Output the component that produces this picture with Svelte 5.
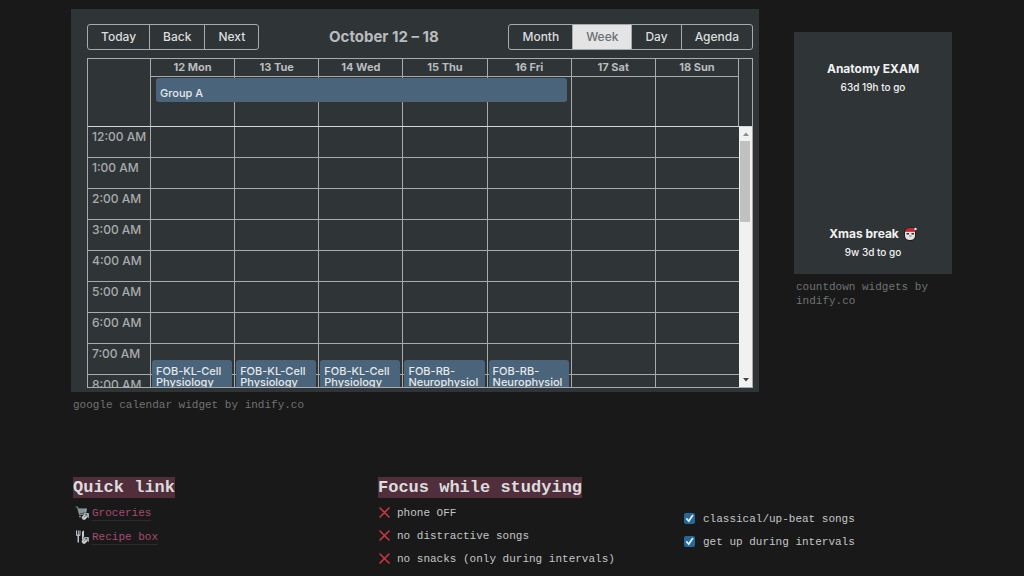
<script>
    const days = ['12 Mon', '13 Tue', '14 Wed', '15 Thu', '16 Fri', '17 Sat', '18 Sun'];
    const views = ['Month', 'Week', 'Day', 'Agenda'];

    // one entry per weekday, all of them start in the 7 AM row
    const events = [
        'FOB-KL-Cell Physiology',
        'FOB-KL-Cell Physiology',
        'FOB-KL-Cell Physiology',
        'FOB-RB-Neurophysiology',
        'FOB-RB-Neurophysiology'
    ];

    const rowHeight = 31;
    const hours = Array.from({ length: 24 }, (_, h) => `${h % 12 || 12}:00 ${h < 12 ? 'AM' : 'PM'}`);
    const avoid = ['phone OFF', 'no distractive songs', 'no snacks (only during intervals)'];

    let view = $state('Week');
    let todo = $state([
        { text: 'classical/up-beat songs', done: true },
        { text: 'get up during intervals', done: true }
    ]);

    let scroller;
    let thumbTop = $state(0);
    let thumbHeight = $state(35);
    // labels below the scrolled area are filled in once they come into view
    let lastHour = $state(9);

    function onScroll() {
        thumbTop = (scroller.scrollTop / scroller.scrollHeight) * 100;
        thumbHeight = (scroller.clientHeight / scroller.scrollHeight) * 100;
        lastHour = Math.ceil((scroller.scrollTop + scroller.clientHeight) / rowHeight);
    }

    function scrollBy(amount) {
        scroller.scrollTop += amount;
    }

    $effect(() => {
        onScroll();
    });
</script>

<main>
    <section class="widgets">
        <figure>
            <div class="calendar">
                <div class="toolbar">
                    <div class="group">
                        <button>Today</button>
                        <button>Back</button>
                        <button>Next</button>
                    </div>
                    <h1>October 12 – 18</h1>
                    <div class="group">
                        {#each views as name}
                            <button class:active={view === name} onclick={() => (view = name)}>{name}</button>
                        {/each}
                    </div>
                </div>

                <div class="week">
                    <div class="head">
                        <table>
                            <colgroup><col class="gutter" /></colgroup>
                            <thead>
                                <tr>
                                    <td rowspan="2"></td>
                                    {#each days as day}
                                        <th scope="col">{day}</th>
                                    {/each}
                                </tr>
                                <tr class="allday">
                                    {#each days as day, i}
                                        <td>
                                            {#if i === 0}
                                                <div class="event wide">Group A</div>
                                            {/if}
                                        </td>
                                    {/each}
                                </tr>
                            </thead>
                        </table>
                    </div>
                    <div class="body">
                        <div class="scroller" bind:this={scroller} onscroll={onScroll}>
                            <table>
                                <colgroup><col class="gutter" /></colgroup>
                                <tbody>
                                    {#each hours as hour, h}
                                        <tr>
                                            <th scope="row">{h < lastHour ? hour : ''}</th>
                                            {#each days as day, i}
                                                <td>
                                                    {#if h === 7 && events[i]}
                                                        <div class="event timed">{events[i]}</div>
                                                    {/if}
                                                </td>
                                            {/each}
                                        </tr>
                                    {/each}
                                </tbody>
                            </table>
                        </div>
                        <div class="scrollbar">
                            <button aria-label="Scroll up" onclick={() => scrollBy(-rowHeight)}>
                                <svg viewBox="0 0 6 4"><path d="M0 4 3 0.5 6 4z" fill="#8b8b8b" /></svg>
                            </button>
                            <div class="track">
                                <div class="thumb" style="top: {thumbTop}%; height: {thumbHeight}%"></div>
                            </div>
                            <button aria-label="Scroll down" onclick={() => scrollBy(rowHeight)}>
                                <svg viewBox="0 0 6 4"><path d="M0 0 3 3.5 6 0z" fill="#444" /></svg>
                            </button>
                        </div>
                    </div>
                </div>
            </div>
            <figcaption>google calendar widget by indify.co</figcaption>
        </figure>

        <figure class="side">
            <div class="countdowns">
                <div>
                    <h3>Anatomy EXAM</h3>
                    <p>63d 19h to go</p>
                </div>
                <div>
                    <h3>
                        Xmas break
                        <svg class="santa" viewBox="0 0 14 14" aria-hidden="true">
                            <path d="M1 7C0 3 3 0 7 0.5L13 0.5 13 8C13 12 10 14 7 14S1 12 1 7z" fill="#1c1d1f" />
                            <path d="M2 4.500h10v4c0 3-2 4.500-5 4.500S2 11.500 2 8.500z" fill="#e4e1e1" />
                            <path d="M2 4.5C3 1 5 1 8 1h4.500L12 4.500z" fill="#d0242c" />
                            <path d="M3.500 6h2.500v1.500H3.500zM8.500 6H11v1.500H8.500z" fill="#33282c" />
                            <path d="M6 8h2.500v2H6z" fill="#c9a0a2" />
                            <circle cx="12.500" cy="2" r="1.200" fill="#eee" />
                        </svg>
                    </h3>
                    <p>9w 3d to go</p>
                </div>
            </div>
            <figcaption>countdown widgets by indify.co</figcaption>
        </figure>
    </section>

    <section class="notes">
        <div>
            <h2>Quick link</h2>
            <ul class="links">
                <li>
                    <svg viewBox="0 0 14 14" aria-hidden="true">
                        <path d="M0.500 1h2l2 7.500h6" fill="none" stroke="#77838b" stroke-width="1.200" />
                        <path d="M3 2.500h9l-1 5H4.200z" fill="#98a5ae" />
                        <path d="M5 3v4M7 3v4M9 3v4" stroke="#56636b" stroke-width="0.600" />
                        <circle cx="5" cy="10.500" r="1" fill="#87939b" />
                        <path d="M8 7h6v5.500l-1.500-1.200-2.500 2.700H8L6.500 12V11l2.500-2.500z" fill="#d3d6d8" stroke="#191919" stroke-width="0.500" />
                        <path d="M8.500 11.800 12 8.500M10 8.500h2v2" fill="none" stroke="#45494c" stroke-width="0.800" />
                    </svg>
                    <a href="#groceries">Groceries</a>
                </li>
                <li>
                    <svg viewBox="0 0 14 14" aria-hidden="true">
                        <path d="M1 0.500v4c0 1 .5 1.500 1.500 1.500v6.500H4V6C5 6 5.500 5.500 5.500 4.500v-4h-1v4h-.7v-4h-1v4H2v-4z" fill="#b5bfc6" />
                        <path d="M7 12.500V2.500C7 1.500 7.800 0.500 9 0.500v12z" fill="#c5cdd2" />
                        <path d="M8.500 7H14v5.500l-1.500-1.200-2.500 2.700H8L6.500 12V11l2.500-2.500z" fill="#d3d6d8" stroke="#191919" stroke-width="0.500" />
                        <path d="M8.500 11.800 12 8.500M10 8.500h2v2" fill="none" stroke="#45494c" stroke-width="0.800" />
                    </svg>
                    <a href="#recipes">Recipe box</a>
                </li>
            </ul>
        </div>
        <div>
            <h2>Focus while studying</h2>
            <ul class="avoid">
                {#each avoid as item}
                    <li>
                        <svg viewBox="0 0 11 11" aria-hidden="true">
                            <path d="M1 1 10 10M10 1 1 10" stroke="#cc3640" stroke-width="1.600" stroke-linecap="round" />
                        </svg>
                        {item}
                    </li>
                {/each}
            </ul>
        </div>
        <ul class="todo">
            {#each todo as item}
                <li>
                    <label><input type="checkbox" bind:checked={item.done} />{item.text}</label>
                </li>
            {/each}
        </ul>
    </section>
</main>

<style>
    :global(body) {
        background: #191919;
    }

    main {
        padding: 9px 72px 0 71px;
        color: #c4c6c7;
        font: 11px/14px 'Liberation Mono', monospace;
    }

    h1, h2, h3, p, ul, figure {
        margin: 0;
        padding: 0;
    }

    ul {
        list-style: none;
    }

    button {
        margin: 0;
        padding: 0;
        border: 0;
        background: none;
        font: inherit;
        color: inherit;
    }

    .widgets {
        display: grid;
        grid-template-columns: minmax(0, 688fr) minmax(0, 158fr);
        gap: 35px;
        align-items: start;
    }

    figcaption {
        padding: 6px 2px 0;
        color: #6f7274;
    }

    .calendar, .countdowns {
        background: #2f3437;
        font-family: Inter, sans-serif;
    }

    .calendar {
        padding: 15px 6px 4px 16px;
    }

    .toolbar {
        display: flex;
        justify-content: space-between;
        align-items: center;
        margin-bottom: 8px;
    }

    h1 {
        color: #b9bcbe;
        font-size: 15px;
        line-height: 20px;
        font-weight: 700;
    }

    .group {
        display: flex;
        border: 1px solid #a8abad;
        border-radius: 3px;
        overflow: hidden;
    }

    .group button {
        padding: 0 13px;
        color: #dcddde;
        font-size: 12px;
        line-height: 24px;
        font-weight: 500;
    }

    .group button + button {
        border-left: 1px solid #a8abad;
    }

    .group .active {
        background: #e4e4e4;
        color: #6a6f74;
    }

    .week {
        border: 1px solid #a8abad;
    }

    .head {
        padding-right: 13px;
        border-bottom: 1px solid #d4d6d7;
    }

    table {
        width: 100%;
        table-layout: fixed;
        border-collapse: separate;
        border-spacing: 0;
    }

    .gutter {
        width: 62px;
    }

    th, td {
        box-sizing: border-box;
        padding: 0;
    }

    td {
        position: relative;
    }

    .head th, .head td + td, .allday td, .body td {
        border-left: 1px solid #a8abad;
    }

    .head th {
        height: 18px;
        border-bottom: 1px solid #a8abad;
        color: #b9bcbe;
        font-size: 11px;
        line-height: 17px;
        font-weight: 700;
    }

    .allday td {
        height: 49px;
    }

    .head th:last-child, .allday td:last-child {
        border-right: 1px solid #a8abad;
    }

    .body {
        display: flex;
    }

    .scroller {
        flex: 1;
        height: 260px;
        overflow-y: scroll;
        scrollbar-width: none;
    }

    .body tr {
        height: 31px;
    }

    .body th, .body td {
        border-bottom: 1px solid #a8abad;
    }

    .body th {
        padding: 2px 0 0 4px;
        color: #a9acae;
        font-size: 12px;
        line-height: 16px;
        font-weight: 500;
        text-align: left;
        vertical-align: top;
        white-space: nowrap;
    }

    .event {
        position: absolute;
        z-index: 1;
        box-sizing: border-box;
        border-radius: 3px;
        background: #4a657b;
        color: #e6e8ea;
        font-size: 11px;
        font-weight: 500;
    }

    /* spans Monday to Friday */
    .wide {
        top: 1px;
        left: 5px;
        width: calc(500% - 5px);
        padding: 7px 4px 0;
        line-height: 17px;
    }

    .timed {
        top: 16px;
        left: 1px;
        right: 2px;
        height: 62px;
        padding: 6px 0 0 4px;
        line-height: 11px;
        overflow: hidden;
        overflow-wrap: anywhere;
    }

    .scrollbar {
        display: flex;
        flex-direction: column;
        width: 13px;
        background: #f1f1f1;
    }

    .scrollbar button {
        display: flex;
        align-items: center;
        justify-content: center;
        height: 14px;
    }

    .scrollbar svg {
        width: 6px;
        height: 4px;
    }

    .track {
        position: relative;
        flex: 1;
    }

    .thumb {
        position: absolute;
        left: 1px;
        right: 2px;
        background: #c1c1c1;
    }

    .side {
        margin-top: 23px;
    }

    .countdowns {
        display: grid;
        gap: 129px;
        padding: 27px 0 14px;
        color: #f0f1f1;
        text-align: center;
    }

    h3 {
        display: flex;
        align-items: center;
        justify-content: center;
        gap: 4px;
        font-size: 12px;
        line-height: 20px;
        font-weight: 700;
    }

    .countdowns p {
        font-size: 10px;
        line-height: 16px;
        font-weight: 500;
    }

    .santa {
        width: 14px;
        height: 14px;
    }

    .notes {
        display: grid;
        grid-template-columns: repeat(3, minmax(0, 1fr));
        gap: 36px;
        margin: 65px 0 0 2px;
    }

    h2 {
        width: fit-content;
        margin-bottom: 3px;
        padding-top: 1px;
        background: #512e3c;
        color: #dcdcdc;
        font-size: 17px;
        line-height: 20px;
        font-weight: 700;
        white-space: nowrap;
    }

    li, label {
        display: flex;
        align-items: center;
        white-space: nowrap;
    }

    li {
        height: 23px;
    }

    .links li {
        height: 24px;
        gap: 3px;
        padding-left: 2px;
    }

    .links svg {
        width: 14px;
        height: 14px;
    }

    a {
        border-bottom: 1px solid #2f2a2d;
        color: #a84a74;
        text-decoration: none;
    }

    .avoid li {
        gap: 7px;
        padding-left: 1px;
    }

    .avoid svg {
        width: 11px;
        height: 11px;
    }

    .todo {
        padding: 30px 0 0 1px;
    }

    label {
        gap: 8px;
    }

    input {
        appearance: none;
        display: grid;
        place-items: center;
        width: 11px;
        height: 11px;
        margin: 0;
        border-radius: 2px;
        background: #555;
    }

    input:checked {
        background: #22699f;
    }

    input:checked::after {
        content: '';
        width: 9px;
        height: 9px;
        background: #eee;
        clip-path: polygon(8% 55%, 22% 42%, 40% 64%, 80% 5%, 96% 16%, 43% 94%);
    }
</style>
